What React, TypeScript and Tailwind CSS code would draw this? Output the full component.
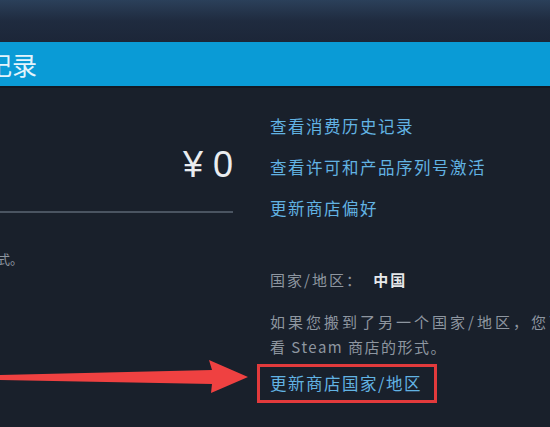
import React from 'react';

const cjk = '"Noto Sans CJK SC", "Noto Sans", sans-serif';

const links = ['查看消费历史记录', '查看许可和产品序列号激活', '更新商店偏好'];

const App = () => {
    return (
        <div
            className="relative w-[550px] h-[427px] overflow-hidden bg-[#19202b]"
            style={{ fontFamily: cjk }}
        >
            {/* top band */}
            <div className="h-[42px] bg-gradient-to-b from-[#2b405a] via-[#1f2b3f] to-[#1c2638]" />

            {/* page title bar */}
            <div className="h-[46px] bg-[#0a9bd6] border-b-2 border-[#111822] flex items-center overflow-hidden">
                <span className="ml-[-13px] text-[25px] leading-none text-[#e4f4fc]">记录</span>
            </div>

            <div className="flex">
                {/* left column */}
                <div className="w-[233px] shrink-0 pt-[55px]">
                    <div className="border-b-2 border-[#4a5461] pb-[24px] text-right">
                        <span
                            className="text-[36px] leading-[44px] text-[#e9ecef]"
                            style={{ fontFamily: '"Liberation Sans", Arial, sans-serif' }}
                        >
                            ¥&nbsp;0
                        </span>
                    </div>
                    <div className="mt-[36px] ml-[-3px] text-[13px] leading-[20px] text-[#8e96a0]">式。</div>
                </div>

                {/* right column */}
                <div className="ml-[37px] pt-[18px] whitespace-nowrap">
                    {links.map((l) => (
                        <div key={l} className="text-[16.5px] leading-[41px] tracking-[1.5px] text-[#62b3e3]">
                            {l}
                        </div>
                    ))}

                    <div className="mt-[38px] text-[15px] leading-[25px] tracking-[2px] text-[#8e96a0]">
                        国家/地区：&nbsp;<span className="ml-[5px] text-[#e6e8ea] font-bold">中国</span>
                    </div>

                    <div className="mt-[17px] text-[15px] leading-[25px] text-[#8e96a0]">
                        <div className="tracking-[3px]">如果您搬到了另一个国家/地区，您可以更改</div>
                        <div className="tracking-[1.5px]">看 Steam 商店的形式。</div>
                    </div>

                    <div className="mt-[5px] ml-[-13px] inline-block border-[3px] border-[#e23a3c] pl-[10px] pr-[12px] py-[4px]">
                        <span className="text-[16.5px] leading-[25px] tracking-[1.5px] text-[#62b3e3]">
                            更新商店国家/地区
                        </span>
                    </div>
                </div>
            </div>

            {/* annotation arrow */}
            <svg className="absolute left-0 top-0 pointer-events-none" width="550" height="427" viewBox="0 0 550 427">
                <polygon points="0,375 212,370 209,360 248,377 211,393 212,384 0,380" fill="#ef4141" />
            </svg>
        </div>
    );
};

export default App;
